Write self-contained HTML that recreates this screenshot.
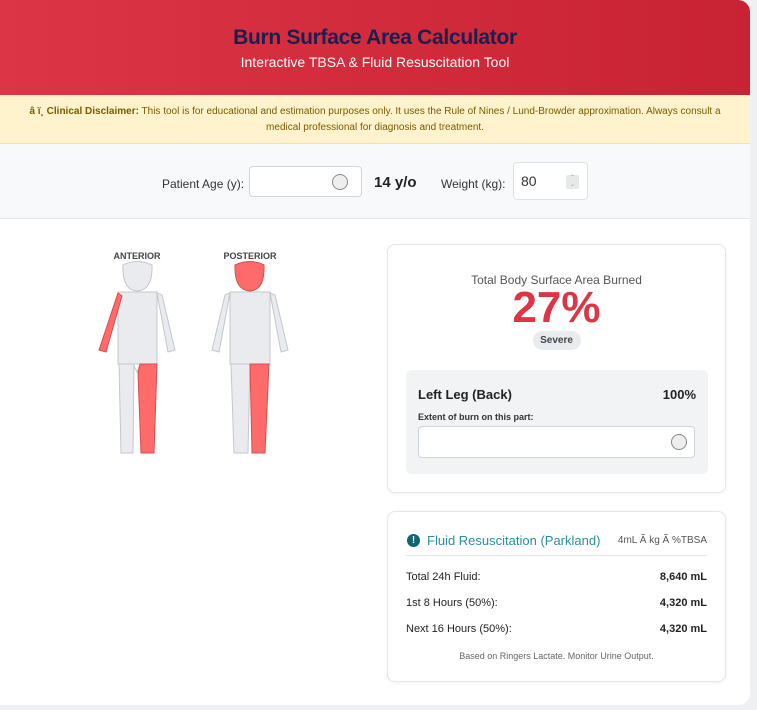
<!DOCTYPE html>
<html><head><meta charset="utf-8"><style>
*{box-sizing:border-box;margin:0;padding:0}
body{width:757px;height:710px;background:#eef0f3;font-family:"Liberation Sans",sans-serif;position:relative;overflow:hidden}
.wrap{position:absolute;left:0;top:0;width:750px;height:705px;background:#fff;border-radius:0 12px 12px 0;overflow:hidden}
.hdr{height:95px;background:linear-gradient(90deg,#dc3545,#c82333);text-align:center;color:#fff}
.hdr h1{font-size:21px;color:#1a1f4d;padding-top:26px;font-weight:bold;letter-spacing:-.3px}
.hdr p{font-size:14px;margin-top:4px}
.disc{height:49px;background:#fff3cd;border-bottom:1px solid #f0e2a8;color:#7a5a00;font-size:10px;text-align:center;line-height:16px;padding:9px 20px 0}
.ctl{height:75px;background:#f8f9fb;border-bottom:1px solid #e3e6ea;position:relative;font-size:12px;color:#333}
.abs{position:absolute}
.inp{position:absolute;background:#fff;border:1px solid #cfd4da;border-radius:4px}
.card{position:absolute;left:387px;background:#fff;border:1px solid #e3e6ea;border-radius:8px;box-shadow:0 1px 4px rgba(0,0,0,.05)}
.row{position:absolute;left:18px;right:18px;font-size:11px;color:#222}
.row b{float:right}
</style></head><body>
<div class="wrap">
<div class="hdr"><h1>Burn Surface Area Calculator</h1><p>Interactive TBSA &amp; Fluid Resuscitation Tool</p></div>
<div class="disc"><b>â ï¸ Clinical Disclaimer:</b> This tool is for educational and estimation purposes only. It uses the Rule of Nines / Lund-Browder approximation. Always consult a medical professional for diagnosis and treatment.</div>
<div class="ctl">
<span class="abs" style="left:162px;top:33px">Patient Age (y):</span>
<div class="inp" style="left:249px;top:22px;width:113px;height:31px"><div style="position:absolute;right:13px;top:7px;width:16px;height:16px;border:1px solid #888;border-radius:50%;background:#eee"></div></div>
<b class="abs" style="left:374px;top:30px;font-size:15px;color:#222">14 y/o</b>
<span class="abs" style="left:441px;top:33px">Weight (kg):</span>
<div class="inp" style="left:513px;top:18px;width:75px;height:38px;border-color:#dde1e5"><span style="position:absolute;left:7px;top:10px;font-size:14px">80</span><div style="position:absolute;right:8px;top:12px;width:13px;height:14px;background:#e6e8ea;border-radius:2px;font-size:6px;color:#999;text-align:center;line-height:7px">&#8963;<br>&#8964;</div></div>
</div>
<svg class="abs" style="left:0;top:0" width="400" height="705">
<g font-family="Liberation Sans" font-size="9" font-weight="bold" fill="#444" text-anchor="middle"><text x="137" y="259">ANTERIOR</text><text x="250" y="259">POSTERIOR</text></g>
<g stroke="#c3c7cc" stroke-width="1" fill="#e9ebee">
<path d="M123 265 Q137 258 152 265 Q153 290 137 291 Q122 290 123 265Z"/>
<rect x="118" y="292" width="39" height="72"/>
<path d="M157 293 L162 295 L175 350 L168 352Z"/>
<path d="M119 364 L134 364 L133 453 L121 453Z"/>
<path d="M133 364 L140 364 L137 372Z" fill="#fff"/>
<path d="M235 265 Q250 258 264 265 Q265 290 250 291 Q234 290 235 265Z" fill="#ff6b6b" stroke="#d94c4c"/>
<rect x="230" y="292" width="40" height="72"/>
<path d="M230 293 L225 295 L212 350 L219 352Z"/>
<path d="M270 293 L275 295 L288 350 L281 352Z"/>
<path d="M231 364 L250 364 L248 453 L234 453Z"/>
</g>
<g fill="#ff6b6b" stroke="#d94c4c">
<path d="M118 293 L122 296 L106 352 L99 350Z"/>
<path d="M140 364 L157 364 L154 453 L141 453 L138 373Z"/>
<path d="M250 364 L269 364 L265 453 L252 453Z"/>
</g>
</svg>
<div class="card" style="top:244px;width:339px;height:249px">
<div style="text-align:center;font-size:12px;color:#555;margin-top:28px">Total Body Surface Area Burned</div>
<div style="text-align:center;font-size:44px;font-weight:bold;color:#dc3545;margin-top:-2px;line-height:46px">27%</div>
<div style="margin:0 auto 0;width:48px;height:19px;border-radius:10px;background:#e9ecef;font-size:10px;font-weight:bold;color:#444;text-align:center;line-height:19px">Severe</div>
<div style="position:absolute;left:18px;top:125px;width:302px;height:104px;background:#f1f3f5;border-radius:6px">
<b style="position:absolute;left:12px;top:17px;font-size:13px;color:#222">Left Leg (Back)</b>
<b style="position:absolute;right:12px;top:17px;font-size:13px;color:#222">100%</b>
<span style="position:absolute;left:12px;top:42px;font-size:9px;color:#333;font-weight:bold">Extent of burn on this part:</span>
<div class="inp" style="left:12px;top:56px;width:277px;height:32px"><div style="position:absolute;right:7px;top:7px;width:16px;height:16px;border:1px solid #888;border-radius:50%;background:#eee"></div></div>
</div></div>
<div class="card" style="top:511px;width:339px;height:171px">
<div style="position:absolute;left:19px;top:22px;width:13px;height:13px;border-radius:50%;background:#0e6674;color:#fff;font-size:10px;font-weight:bold;text-align:center;line-height:13px">!</div>
<span style="position:absolute;left:39px;top:21px;font-size:13px;color:#2a8fa3">Fluid Resuscitation (Parkland)</span>
<span style="position:absolute;right:18px;top:23px;font-size:10px;color:#555">4mL Ã kg Ã %TBSA</span>
<div style="position:absolute;left:18px;right:18px;top:43px;border-top:1px solid #e3e6ea"></div>
<div class="row" style="top:59px">Total 24h Fluid:<b>8,640 mL</b></div>
<div class="row" style="top:85px">1st 8 Hours (50%):<b>4,320 mL</b></div>
<div class="row" style="top:111px">Next 16 Hours (50%):<b>4,320 mL</b></div>
<div style="position:absolute;left:0;right:0;top:139px;text-align:center;font-size:9px;color:#666">Based on Ringers Lactate. Monitor Urine Output.</div>
</div>
</div>
</body></html>
